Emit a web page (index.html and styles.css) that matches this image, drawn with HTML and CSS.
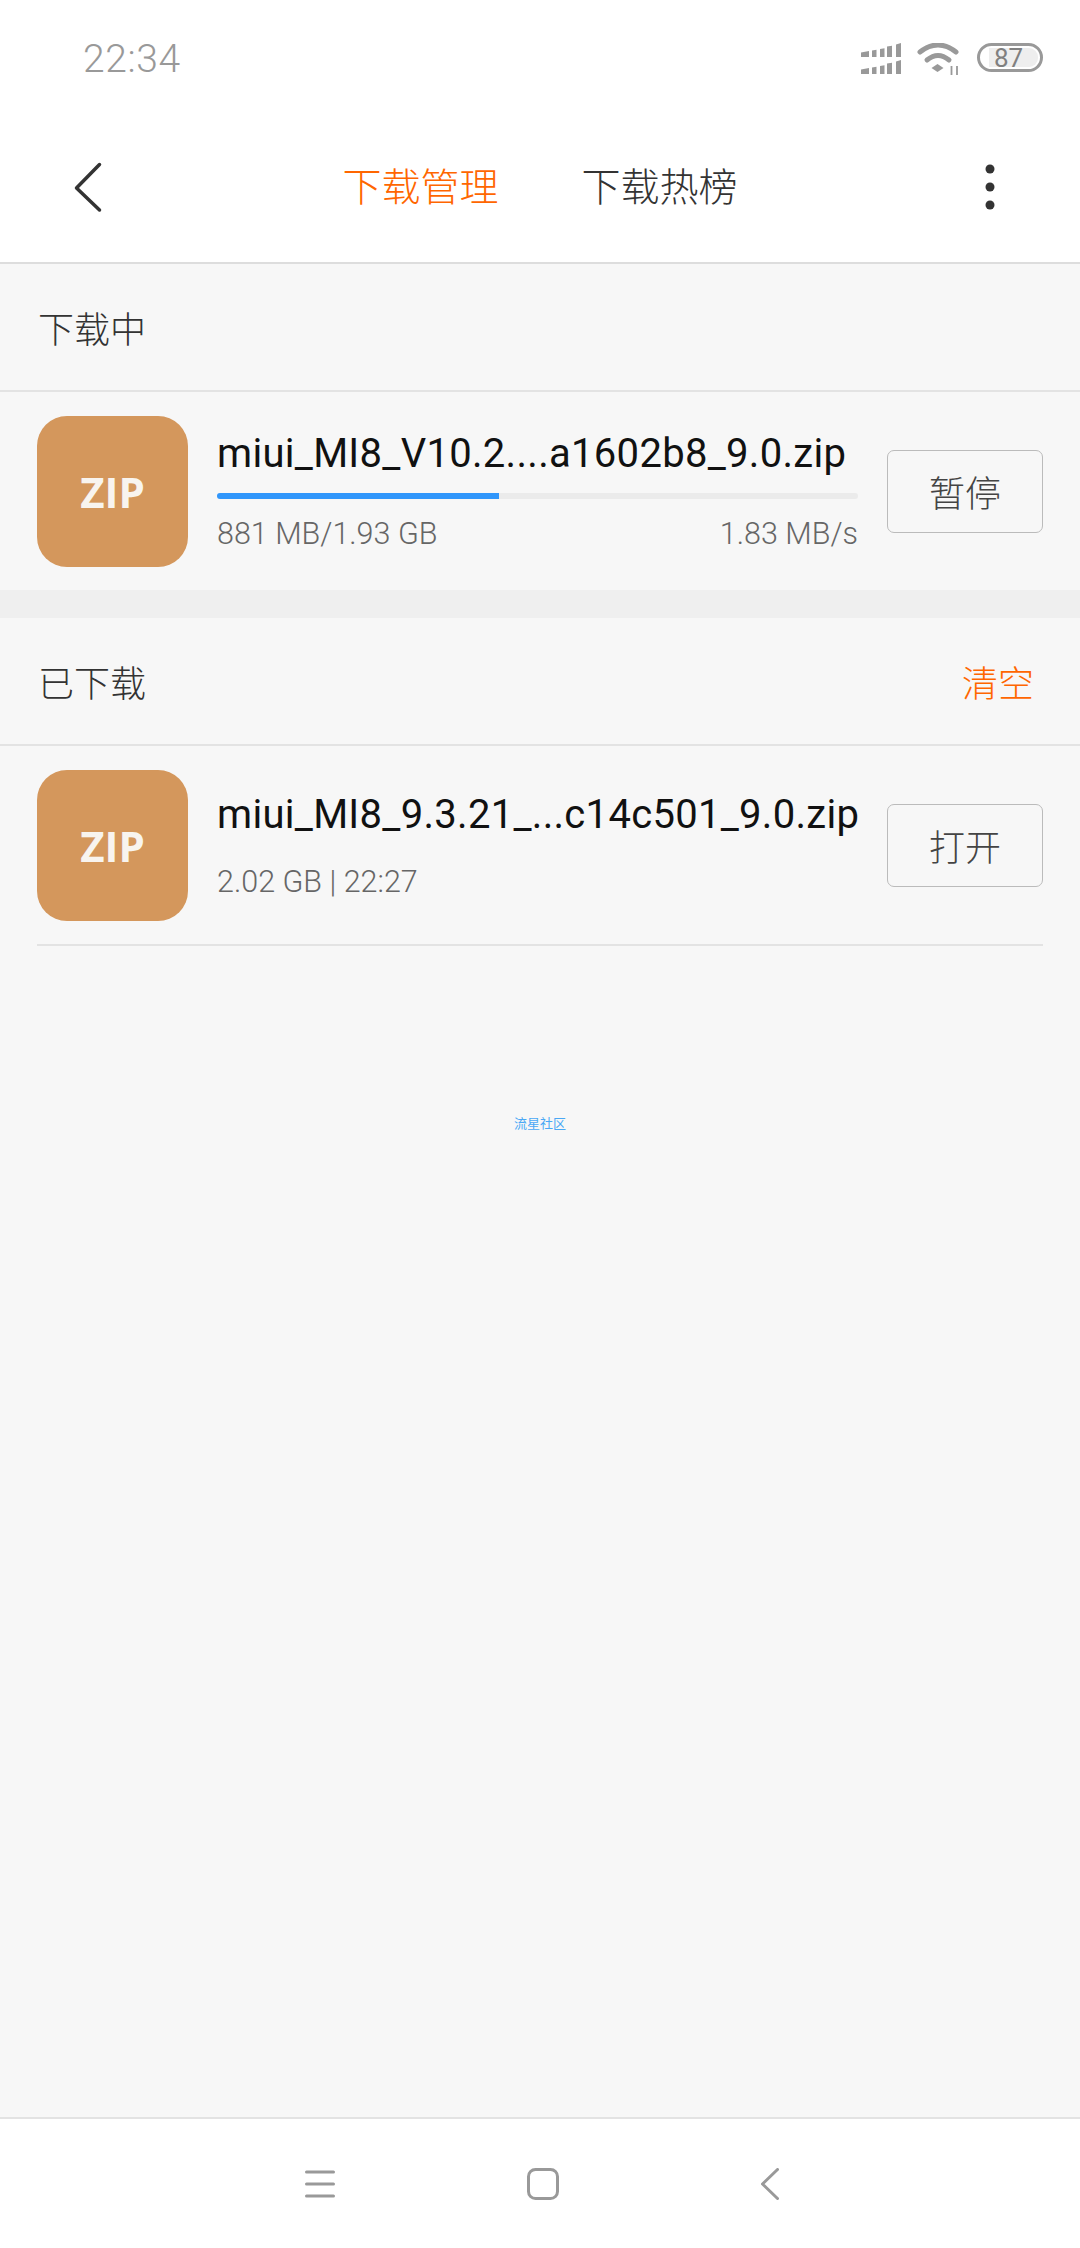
FILE: index.html
```html
<!DOCTYPE html>
<html lang="zh-CN">
<head>
    <meta charset="UTF-8">
    <meta name="viewport" content="width=device-width, initial-scale=1.0">
    <title>下载管理</title>
    <link rel="stylesheet" href="styles.css">
</head>
<body>
    <div class="status-bar">
        <div class="time">22:34</div>
        <div class="status-icons">
            <svg class="signal" width="40" height="31" viewBox="0 0 40 31">
                <g fill="#999">
                    <path d="M0 9.500l8-1.500v6H0zM11 7.500l4.500-.8V14H11zM19 6l4.500-.8V14H19zM26 3.500l5-.8V14h-5zM35 1.500l5-1.500V14h-5z"/>
                    <path d="M0 26.500l8-1.500v6H0zM11 24.500l4.500-.8V31H11zM19 23l4.500-.8V31H19zM26 20.500l5-.8V31h-5zM35 18.500l5-1.500V31h-5z"/>
                </g>
            </svg>
            <svg class="wifi" width="44" height="32" viewBox="0 0 44 32">
                <g fill="none" stroke="#999" stroke-width="5" stroke-linecap="round">
                    <path d="M3 9Q21-5 39 9"/>
                    <path d="M10 17Q21 8 32 17"/>
                </g>
                <path d="M20.500 21l6 4-6 4-6-4z" fill="#999"/>
                <path d="M34.500 23v9M40 23v9" stroke="#999" stroke-width="1.800" fill="none"/>
            </svg>
            <div class="battery"><span class="battery-level">87</span></div>
        </div>
    </div>

    <header class="toolbar">
        <div class="toolbar-btn">
            <svg width="60" height="60" viewBox="0 0 60 60">
                <path d="M39.500 7.500L16.500 31L39.500 53" transform="translate(0 -1)" fill="none" stroke="#333" stroke-width="3.500" stroke-linecap="round" stroke-linejoin="round"/>
            </svg>
        </div>
        <nav class="tabs">
            <div class="tab active">下载管理</div>
            <div class="tab">下载热榜</div>
        </nav>
        <div class="toolbar-btn">
            <svg width="60" height="60" viewBox="0 0 60 60">
                <circle cx="30" cy="11" r="4.500" fill="#333"/>
                <circle cx="30" cy="29" r="4.500" fill="#333"/>
                <circle cx="30" cy="47" r="4.500" fill="#333"/>
            </svg>
        </div>
    </header>

    <main class="content">
        <section>
            <div class="section-head">
                <span>下载中</span>
            </div>
            <div class="file-row">
                <div class="file-icon">ZIP</div>
                <div class="file-info downloading">
                    <div class="file-name">miui_MI8_V10.2....a1602b8_9.0.zip</div>
                    <div class="progress"><div class="progress-fill"></div></div>
                    <div class="file-meta">
                        <span>881 MB/1.93 GB</span>
                        <span>1.83 MB/s</span>
                    </div>
                </div>
                <button class="file-btn">暂停</button>
            </div>
        </section>

        <div class="band"></div>

        <section>
            <div class="section-head">
                <span>已下载</span>
                <span class="clear">清空</span>
            </div>
            <div class="file-row">
                <div class="file-icon">ZIP</div>
                <div class="file-info">
                    <div class="file-name">miui_MI8_9.3.21_...c14c501_9.0.zip</div>
                    <div class="file-meta">
                        <span>2.02 GB | 22:27</span>
                    </div>
                </div>
                <button class="file-btn">打开</button>
            </div>
            <div class="row-line"></div>
        </section>

        <div class="watermark">流星社区</div>
    </main>

    <footer class="nav-bar">
        <svg class="nav-menu" width="30" height="30" viewBox="0 0 30 30">
            <path d="M1.500 3h27M1.500 15h27M1.500 27h27" fill="none" stroke="#999" stroke-width="3" stroke-linecap="round"/>
        </svg>
        <svg class="nav-home" width="32" height="32" viewBox="0 0 32 32">
            <rect x="1.500" y="1.500" width="29" height="29" rx="7" fill="none" stroke="#999" stroke-width="3"/>
        </svg>
        <svg class="nav-back" width="18" height="32" viewBox="0 0 18 32">
            <path d="M16.500 1.500L1.500 16l15 14.500" fill="none" stroke="#999" stroke-width="3" stroke-linecap="round" stroke-linejoin="round"/>
        </svg>
    </footer>
</body>
</html>
```

FILE: styles.css
```css
* {
    box-sizing: border-box;
}

body {
    margin: 0;
    width: 1080px;
    height: 2248px;
    display: flex;
    flex-direction: column;
    font-family: Roboto, "Noto Sans CJK SC", sans-serif;
    background-color: #f7f7f7;
    color: #333;
}

/* Status bar */
.status-bar {
    height: 113px;
    padding: 4px 37px 0 83px;
    display: flex;
    justify-content: space-between;
    align-items: center;
    background-color: #fff;
}

.time {
    font-size: 39px;
    font-weight: 300;
    letter-spacing: 0.6px;
    color: #999;
}

.status-icons {
    display: flex;
    align-items: flex-start;
    gap: 16px;
}

.battery {
    width: 66px;
    height: 29px;
    padding: 2px 2px 2px 9px;
    border: 3.5px solid #999;
    border-radius: 15px;
    display: flex;
}

.battery-level {
    flex: 1;
    background-color: #eee;
    border-radius: 0 9px 9px 0;
    font-size: 26px;
    line-height: 20px;
    padding-left: 5px;
    color: #808080;
}

/* Toolbar */
.toolbar {
    height: 151px;
    padding: 0 60px;
    display: flex;
    justify-content: space-between;
    align-items: center;
    background-color: #fff;
    border-bottom: 2px solid #ddd;
}

.toolbar-btn {
    width: 60px;
    height: 60px;
}

.tabs {
    display: flex;
    gap: 83px;
}

.tab {
    font-size: 39px;
    line-height: 50px;
    font-weight: 300;
    color: #333;
}

.tab.active {
    color: #ff6600;
}

/* Lists */
.content {
    flex: 1;
}

.section-head {
    height: 128px;
    padding: 0 46px 0 38px;
    display: flex;
    justify-content: space-between;
    align-items: center;
    font-size: 36px;
    font-weight: 300;
    border-bottom: 2px solid #e3e3e3;
}

.clear {
    color: #ff6600;
}

.file-row {
    height: 198px;
    padding: 0 37px;
    display: flex;
    align-items: center;
    gap: 29px;
}

.file-icon {
    width: 151px;
    height: 151px;
    flex-shrink: 0;
    display: flex;
    justify-content: center;
    align-items: center;
    background-color: #d4975c;
    border-radius: 30px;
    font-family: "Open Sans", sans-serif;
    font-size: 42px;
    font-weight: 700;
    color: #f8f4ef;
}

.file-info {
    flex: 1;
    min-width: 0;
}

.file-name {
    font-size: 40px;
    line-height: 48px;
    letter-spacing: 0.3px;
    white-space: nowrap;
    color: #111;
}

.file-meta {
    margin-top: 25px;
    display: flex;
    justify-content: space-between;
    font-size: 30.5px;
    line-height: 36px;
    font-weight: 300;
    color: #666;
}

.downloading .file-meta {
    margin-top: 17px;
}

.progress {
    height: 6px;
    margin-top: 15px;
    background-color: #ebebeb;
    border-radius: 3px;
    overflow: hidden;
}

.progress-fill {
    width: 44%;
    height: 100%;
    background-color: #3096fb;
}

.file-btn {
    width: 156px;
    height: 83px;
    flex-shrink: 0;
    padding: 0;
    background: transparent;
    border: 1.5px solid #bbb;
    border-radius: 7px;
    font-family: inherit;
    font-size: 36px;
    font-weight: 300;
    color: #444;
}

.row-line {
    height: 2px;
    margin: 0 37px;
    background-color: #e3e3e3;
}

.band {
    height: 28px;
    background-color: #efefef;
}

.watermark {
    margin-top: 170px;
    text-align: center;
    font-size: 13px;
    line-height: 16px;
    color: #4aa8f5;
}

/* Bottom navigation */
.nav-bar {
    height: 131px;
    padding-left: 305px;
    display: flex;
    align-items: center;
    background-color: #fff;
    border-top: 2px solid #e3e3e3;
}

.nav-menu {
    margin-right: 192px;
}

.nav-home {
    margin-right: 202px;
}
```
